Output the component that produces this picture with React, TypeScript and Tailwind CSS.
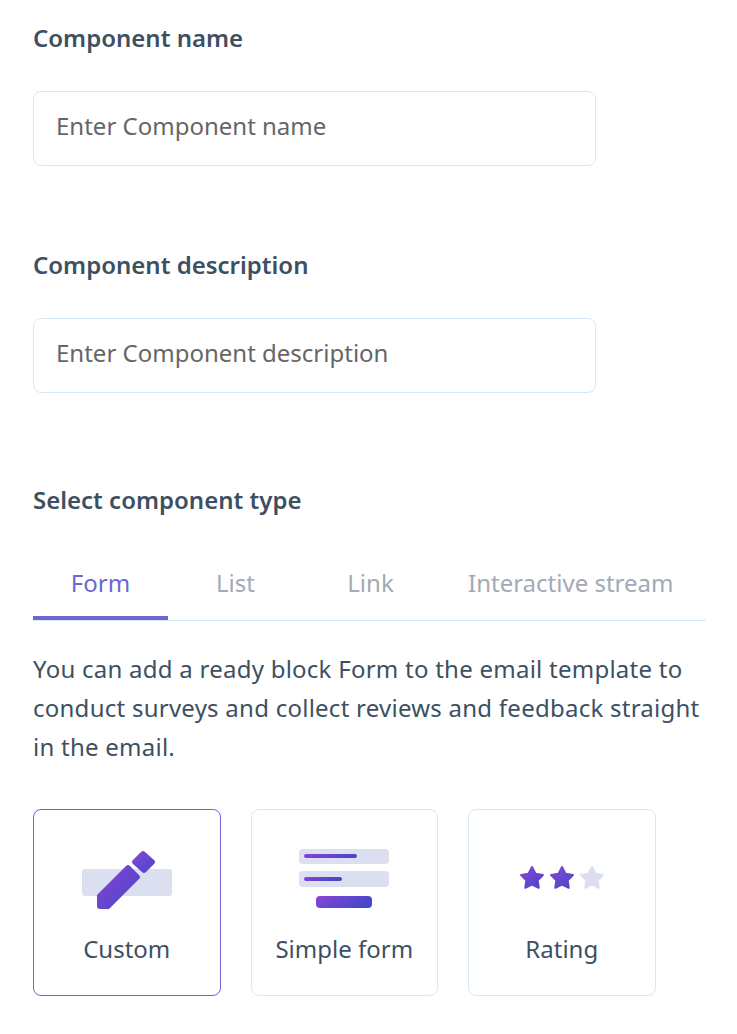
import { useState } from 'react'

const TABS = ['Form', 'List', 'Link', 'Interactive stream']

function PenIcon() {
  return (
    <svg width="92" height="62" viewBox="0 0 92 62" fill="none">
      <defs>
        <linearGradient id="penA" x1="0" y1="0" x2="1" y2="1">
          <stop offset="0" stopColor="#8a44d8" />
          <stop offset="1" stopColor="#4648c6" />
        </linearGradient>
      </defs>
      <rect x="1" y="20" width="90" height="27" rx="3" fill="#dcdfef" />
      <path d="M16 46 L45 17 Q47 15 49 17 L58 26 Q60 28 58 30 L28 60 H19 Q16 60 16 57 Z" fill="url(#penA)" />
      <path d="M52 11 L60 3 Q62 1 64 3 L73 11 Q75 13 73 15 L65 23 Q63 25 61 23 L52 15 Q50 13 52 11 Z" fill="url(#penA)" />
    </svg>
  )
}

function SimpleFormIcon() {
  return (
    <svg width="92" height="62" viewBox="0 0 92 62" fill="none">
      <defs>
        <linearGradient id="formA" x1="0" y1="0" x2="1" y2="0.4">
          <stop offset="0" stopColor="#8a44d8" />
          <stop offset="1" stopColor="#4648c6" />
        </linearGradient>
      </defs>
      <rect x="1" y="0" width="90" height="15" rx="4" fill="#dcdfef" />
      <rect x="6" y="5" width="53" height="4" rx="2" fill="url(#formA)" />
      <rect x="1" y="22" width="90" height="16" rx="4" fill="#dcdfef" />
      <rect x="6" y="28" width="38" height="4" rx="2" fill="url(#formA)" />
      <rect x="18" y="47" width="56" height="12" rx="4" fill="url(#formA)" />
    </svg>
  )
}

function Star({ fill }: { fill: string }) {
  return (
    <svg width="26" height="25" viewBox="0 0 26 25">
      <path
        d="M13 2 L16.500 8.650 L23.900 9.950 L18.700 15.350 L19.760 22.800 L13 19.500 L6.240 22.800 L7.300 15.350 L2.060 9.950 L9.500 8.650 Z"
        fill={fill}
        stroke={fill}
        strokeWidth="2"
        strokeLinejoin="round"
      />
    </svg>
  )
}

function RatingIcon() {
  return (
    <div className="flex gap-[4px]">
      <svg width="0" height="0" className="absolute">
        <defs>
          <linearGradient id="starA" gradientUnits="userSpaceOnUse" x1="2" y1="2" x2="24" y2="24">
            <stop offset="0" stopColor="#8a44d8" />
            <stop offset="1" stopColor="#4648c6" />
          </linearGradient>
        </defs>
      </svg>
      <Star fill="url(#starA)" />
      <Star fill="url(#starA)" />
      <Star fill="#dcdfef" />
    </div>
  )
}

function Field({ label, placeholder }: { label: string; placeholder: string }) {
  return (
    <div>
      <label className="block text-[24px] leading-[32px] font-semibold text-[#3d5062]">{label}</label>
      <input
        placeholder={placeholder}
        className="mt-[37px] block w-[563px] h-[75px] rounded-[8px] border border-[#d9e8f5] bg-white px-[22px] pb-[6px] text-[24px] outline-none placeholder:text-[#666666]"
      />
    </div>
  )
}

function TypeCard({ label, active, icon }: { label: string; active?: boolean; icon: React.ReactNode }) {
  return (
    <div
      className={`flex h-[187px] w-[187.5px] flex-col items-center rounded-[8px] border ${
        active ? 'border-[#6a67d4]' : 'border-[#d9e8f5]'
      }`}
    >
      <div className="mt-[39px] flex h-[60px] items-start justify-center">{icon}</div>
      <span className="mt-[20px] text-[24px] leading-[40px] text-[#3d5062]">{label}</span>
    </div>
  )
}

export default function App() {
  const [selected] = useState('Form')

  return (
    <div className="min-h-[1034px] bg-white pl-[33px] pt-[22px] font-['Noto_Sans',sans-serif]">
      <div className="flex flex-col gap-[83px]">
        <Field label="Component name" placeholder="Enter Component name" />
        <Field label="Component description" placeholder="Enter Component description" />
      </div>

      <p className="mt-[91px] text-[24px] leading-[32px] font-semibold text-[#3d5062]">Select component type</p>

      {/* Tabs */}
      <div className="mt-[35px] flex w-[673px] border-b border-[#d9e8f5]">
        {TABS.map(t => (
          <div
            key={t}
            className={`min-w-[135px] h-[69px] px-[30px] pt-[12px] text-center text-[24px] leading-[40px] border-b-4 ${
              selected === t ? 'border-[#6a67d4] text-[#6a67d4]' : 'border-transparent text-[#a3aab5]'
            }`}
          >
            {t}
          </div>
        ))}
      </div>

      <p className="mt-[28px] w-[673px] text-[24px] leading-[39px] tracking-[0.25px] text-[#3d5062]">
        You can add a ready block Form to the email template to conduct surveys and collect reviews and feedback
        straight in the email.
      </p>

      <div className="mt-[43px] flex gap-[30px]">
        <TypeCard label="Custom" active icon={<PenIcon />} />
        <TypeCard label="Simple form" icon={<SimpleFormIcon />} />
        <TypeCard label="Rating" icon={<div className="mt-[16px]"><RatingIcon /></div>} />
      </div>
    </div>
  )
}
